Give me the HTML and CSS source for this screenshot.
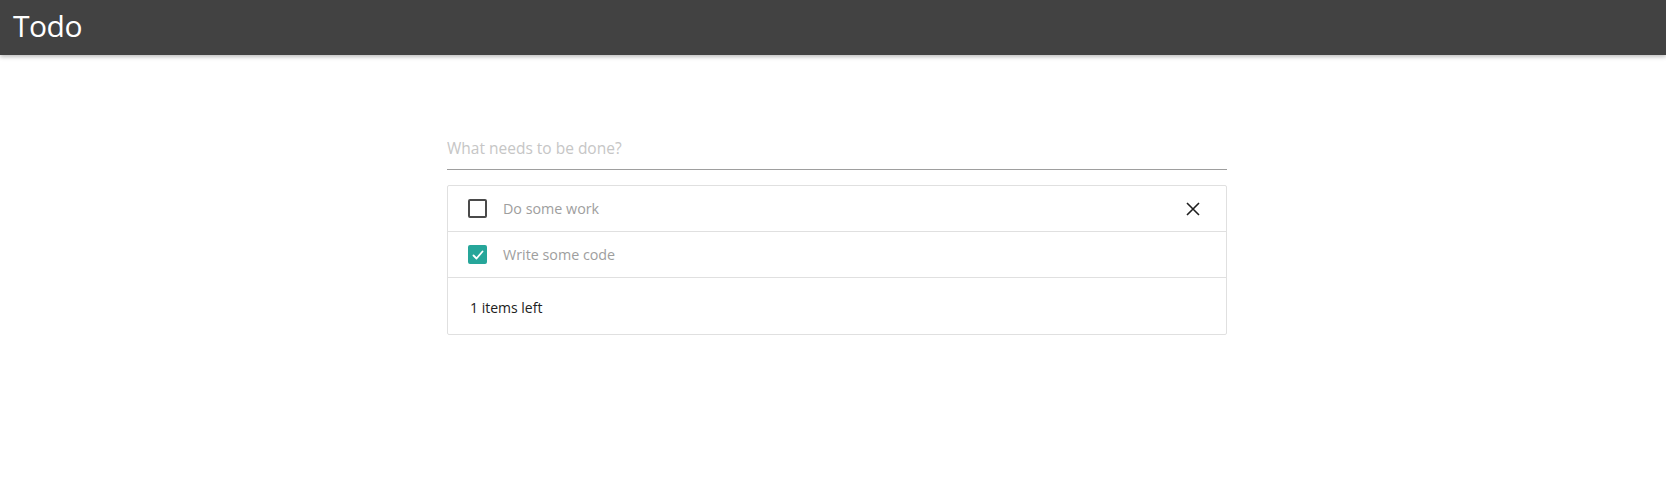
FILE: index.html
```html
<!DOCTYPE html>
<html lang="en">
<head>
<meta charset="utf-8">
<title>Todo</title>
<link rel="stylesheet" href="styles.css">
</head>
<body>
<header class="app-bar">
  <h1 class="app-title">Todo</h1>
</header>
<main class="main">
  <section class="todo">
    <input class="new-todo" type="text" placeholder="What needs to be done?">
    <ul class="todo-list">
      <li class="todo-item">
        <span class="check"></span>
        <span class="todo-text">Do some work</span>
        <button class="remove" aria-label="Remove">
          <svg width="14" height="14" viewBox="0 0 14 14"><path d="M1 1 L13 13 M13 1 L1 13" stroke="#1f1f1f" stroke-width="1.6" fill="none"/></svg>
        </button>
      </li>
      <li class="todo-item">
        <span class="check checked">
          <svg width="14" height="14" viewBox="0 0 14 14"><path d="M2.5 7.5 L5.5 10.5 L11.5 3.5" stroke="#fff" stroke-width="1.8" fill="none" stroke-linecap="round" stroke-linejoin="round"/></svg>
        </span>
        <span class="todo-text">Write some code</span>
      </li>
      <li class="todo-footer">1 items left</li>
    </ul>
  </section>
</main>
</body>
</html>
```
FILE: styles.css
```css
* { box-sizing: border-box; }
html, body { margin: 0; padding: 0; background: #fff; }
body { font-family: "Open Sans", "Noto Sans", sans-serif; color: #212121; }

.app-bar {
  height: 55px;
  background: #424242;
  box-shadow: 0 2px 4px rgba(0,0,0,0.25);
  display: flex;
  align-items: center;
  padding-left: 13px;
}
.app-title {
  margin: 0;
  color: #fff;
  font-weight: 400;
  font-size: 30px;
  letter-spacing: -0.5px;
  line-height: 1;
  padding-bottom: 4px;
}

.main { padding: 67px 0 0 8px; }
.todo { width: 780px; margin: 0 auto; }

.new-todo {
  display: block;
  width: 100%;
  height: 48px;
  border: none;
  border-bottom: 1px solid #9e9e9e;
  outline: none;
  padding: 4px 0 0 0;
  font-family: inherit;
  font-size: 15.5px;
  color: #212121;
  margin: 0 0 15px 0;
}
.new-todo::placeholder { color: #c6c6c6; }

.todo-list {
  list-style: none;
  margin: 0;
  padding: 0;
  border: 1px solid #e0e0e0;
  border-radius: 2px;
}
.todo-item {
  height: 46px;
  border-bottom: 1px solid #e0e0e0;
  display: flex;
  align-items: center;
  padding: 0 26px 0 20px;
}
.check {
  width: 19px;
  height: 19px;
  border: 2px solid #4a4a4a;
  border-radius: 2px;
  display: flex;
  align-items: center;
  justify-content: center;
  flex: none;
}
.check.checked { background: #26a69a; border-color: #26a69a; }
.todo-text {
  margin-left: 16px;
  font-size: 14.3px;
  color: #9e9e9e;
  flex: 1;
}
.remove {
  border: none;
  background: none;
  padding: 0;
  width: 14px;
  height: 14px;
  display: flex;
  cursor: pointer;
}
.todo-footer {
  height: 56px;
  display: flex;
  align-items: center;
  padding-left: 22px;
  padding-top: 2px;
  font-size: 14px;
  color: #212121;
}
```
